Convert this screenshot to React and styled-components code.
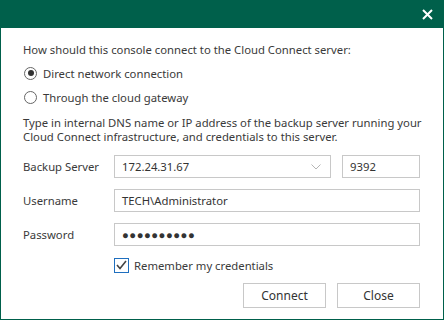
import React, { useState } from 'react';
import styled, { createGlobalStyle } from 'styled-components';

const GREEN = '#00604b';
const TEXT = '#3a3a3a';

const GlobalStyle = createGlobalStyle`
  html, body {
    margin: 0;
    padding: 0;
    background: #fff;
  }
  * { box-sizing: border-box; }
`;

const Window = styled.div`
  width: 444px;
  height: 320px;
  border: 1px solid ${GREEN};
  border-top: none;
  display: flex;
  flex-direction: column;
  font-family: 'Noto Sans', sans-serif;
  font-size: 11.3px;
  color: ${TEXT};
  background: #fff;
`;

const TitleBar = styled.div`
  height: 28px;
  margin: 0 -1px;
  background: ${GREEN};
  display: flex;
  align-items: center;
  justify-content: flex-end;
  padding-right: 9px;
`;

const CloseX = styled.button`
  width: 16px;
  height: 16px;
  border: none;
  background: none;
  padding: 0;
  display: flex;
  align-items: center;
  justify-content: center;
  cursor: pointer;
`;

const Body = styled.div`
  flex: 1;
  padding: 14px 23px 10px 22px;
  display: flex;
  flex-direction: column;
`;

const Question = styled.div`
  line-height: 16px;
  margin-bottom: 7px;
`;

const RadioRow = styled.label`
  display: flex;
  align-items: center;
  gap: 6px;
  height: 16px;
  margin-bottom: 8px;
  padding-left: 1px;
  cursor: pointer;
`;

const RadioCircle = styled.span`
  width: 13px;
  height: 13px;
  border-radius: 50%;
  border: 1px solid #666;
  display: flex;
  align-items: center;
  justify-content: center;
  &::after {
    content: '';
    width: 6px;
    height: 6px;
    border-radius: 50%;
    background: ${p => (p.$checked ? '#333' : 'transparent')};
  }
`;

const Hint = styled.p`
  margin: 3px 0 11px 0;
  line-height: 14px;
  white-space: nowrap;
`;

const FormRow = styled.div`
  display: flex;
  align-items: center;
  gap: 11px;
  margin-bottom: 11px;
`;

const Label = styled.div`
  width: 80px;
  flex-shrink: 0;
`;

const Field = styled.div`
  flex: ${p => (p.$width ? `0 0 ${p.$width}px` : '1')};
  height: 23px;
  border: 1px solid #c8c8c8;
  display: flex;
  align-items: center;
  padding: 0 7px;
  position: relative;
  color: #333;
  letter-spacing: ${p => (p.$dots ? '0.5px' : '0')};
`;

const Chevron = styled.svg`
  position: absolute;
  right: 9px;
  top: 8px;
`;

const CheckRow = styled.label`
  display: flex;
  align-items: center;
  gap: 5px;
  margin-left: 91px;
  height: 16px;
  cursor: pointer;
`;

const CheckBox = styled.span`
  width: 15px;
  height: 15px;
  border: 1px solid #1f6fbf;
  display: flex;
  align-items: center;
  justify-content: center;
`;

const Buttons = styled.div`
  display: flex;
  justify-content: flex-end;
  gap: 11px;
  margin-top: 10px;
`;

const Button = styled.button`
  width: 83px;
  height: 25px;
  border: 1px solid #c8c8c8;
  background: #fff;
  font-family: inherit;
  font-size: 12px;
  color: #333;
  padding: 0;
  cursor: pointer;
`;

export default function App() {
  const [mode, setMode] = useState('direct');
  const [remember, setRemember] = useState(true);

  return (
    <>
      <GlobalStyle />
      <Window>
        <TitleBar>
          <CloseX aria-label="Close">
            <svg width="11" height="11" viewBox="0 0 11 11">
              <path d="M1 1 L10 10 M10 1 L1 10" stroke="#fff" strokeWidth="2" />
            </svg>
          </CloseX>
        </TitleBar>
        <Body>
          <Question>How should this console connect to the Cloud Connect server:</Question>
          <RadioRow onClick={() => setMode('direct')}>
            <RadioCircle $checked={mode === 'direct'} />
            Direct network connection
          </RadioRow>
          <RadioRow onClick={() => setMode('gateway')}>
            <RadioCircle $checked={mode === 'gateway'} />
            Through the cloud gateway
          </RadioRow>
          <Hint>
            Type in internal DNS name or IP address of the backup server running your
            <br />
            Cloud Connect infrastructure, and credentials to this server.
          </Hint>
          <FormRow>
            <Label>Backup Server</Label>
            <Field $width={217}>
              172.24.31.67
              <Chevron width="10" height="6" viewBox="0 0 10 6">
                <path d="M0.5 0.5 L5 5 L9.5 0.5" fill="none" stroke="#b5b5b5" strokeWidth="1" />
              </Chevron>
            </Field>
            <Field>9392</Field>
          </FormRow>
          <FormRow>
            <Label>Username</Label>
            <Field>TECH\Administrator</Field>
          </FormRow>
          <FormRow>
            <Label>Password</Label>
            <Field $dots>●●●●●●●●●●</Field>
          </FormRow>
          <CheckRow onClick={() => setRemember(!remember)}>
            <CheckBox>
              {remember && (
                <svg width="11" height="10" viewBox="0 0 11 10">
                  <path d="M1 5 L4 8.5 L10 1" fill="none" stroke="#444" strokeWidth="1.6" />
                </svg>
              )}
            </CheckBox>
            Remember my credentials
          </CheckRow>
          <Buttons>
            <Button>Connect</Button>
            <Button>Close</Button>
          </Buttons>
        </Body>
      </Window>
    </>
  );
}
